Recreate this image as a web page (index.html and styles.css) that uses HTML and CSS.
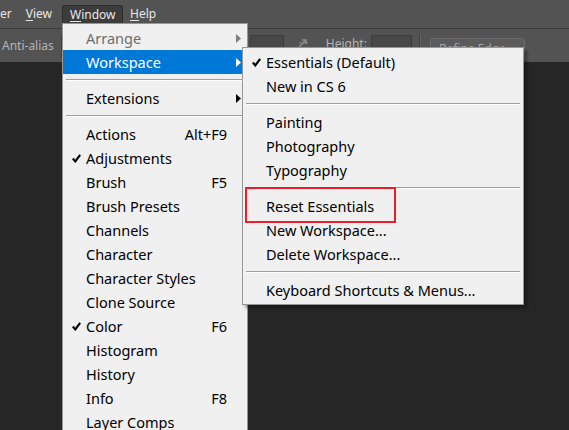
FILE: index.html
```html
<!DOCTYPE html>
<html lang="en">
<head>
    <meta charset="UTF-8">
    <title>Window &gt; Workspace</title>
    <link rel="stylesheet" href="styles.css">
</head>
<body>
    <div class="menubar">
        <span class="menubar-item cut">er</span>
        <span class="menubar-item"><u>V</u>iew</span>
        <span class="menubar-item open"><u>W</u>indow</span>
        <span class="menubar-item"><u>H</u>elp</span>
    </div>

    <div class="optionsbar">
        <span class="opt-label">Anti-alias</span>
        <span class="opt-sep"></span>
        <span class="opt-field wide"></span>
        <svg class="swap" width="12" height="10" viewBox="0 0 12 10">
            <path d="M1 9 L8 2 M4 2 H8 V6" fill="none" stroke="#8a8a8a" stroke-width="1.6"/>
            <path d="M1 5 H10" fill="none" stroke="#8a8a8a" stroke-width="1"/>
        </svg>
        <span class="opt-label height">Height:</span>
        <span class="opt-field"></span>
        <span class="opt-sep right"></span>
        <span class="opt-button">Refine Edge...</span>
    </div>

    <div class="canvas"></div>

    <!-- Window menu -->
    <div class="menu main-menu">
        <div class="row disabled"><span class="check"></span><span class="label">Arrange</span><span class="key"></span><span class="sub"><svg width="5" height="9" viewBox="0 0 5 9"><polygon points="0,0 5,4.5 0,9"/></svg></span></div>
        <div class="row active"><span class="check"></span><span class="label">Workspace</span><span class="key"></span><span class="sub"><svg width="5" height="9" viewBox="0 0 5 9"><polygon points="0,0 5,4.5 0,9"/></svg></span></div>
        <div class="sep"></div>
        <div class="row"><span class="check"></span><span class="label">Extensions</span><span class="key"></span><span class="sub"><svg width="5" height="9" viewBox="0 0 5 9"><polygon points="0,0 5,4.5 0,9"/></svg></span></div>
        <div class="sep"></div>
        <div class="row"><span class="check"></span><span class="label">Actions</span><span class="key">Alt+F9</span><span class="sub"></span></div>
        <div class="row"><span class="check on"></span><span class="label">Adjustments</span><span class="key"></span><span class="sub"></span></div>
        <div class="row"><span class="check"></span><span class="label">Brush</span><span class="key">F5</span><span class="sub"></span></div>
        <div class="row"><span class="check"></span><span class="label">Brush Presets</span><span class="key"></span><span class="sub"></span></div>
        <div class="row"><span class="check"></span><span class="label">Channels</span><span class="key"></span><span class="sub"></span></div>
        <div class="row"><span class="check"></span><span class="label">Character</span><span class="key"></span><span class="sub"></span></div>
        <div class="row"><span class="check"></span><span class="label">Character Styles</span><span class="key"></span><span class="sub"></span></div>
        <div class="row"><span class="check"></span><span class="label">Clone Source</span><span class="key"></span><span class="sub"></span></div>
        <div class="row"><span class="check on"></span><span class="label">Color</span><span class="key">F6</span><span class="sub"></span></div>
        <div class="row"><span class="check"></span><span class="label">Histogram</span><span class="key"></span><span class="sub"></span></div>
        <div class="row"><span class="check"></span><span class="label">History</span><span class="key"></span><span class="sub"></span></div>
        <div class="row"><span class="check"></span><span class="label">Info</span><span class="key">F8</span><span class="sub"></span></div>
        <div class="row"><span class="check"></span><span class="label">Layer Comps</span><span class="key"></span><span class="sub"></span></div>
    </div>

    <!-- Workspace submenu -->
    <div class="menu submenu">
        <div class="row"><span class="check on"></span><span class="label">Essentials (Default)</span></div>
        <div class="row"><span class="check"></span><span class="label">New in CS 6</span></div>
        <div class="sep"></div>
        <div class="row"><span class="check"></span><span class="label">Painting</span></div>
        <div class="row"><span class="check"></span><span class="label">Photography</span></div>
        <div class="row"><span class="check"></span><span class="label">Typography</span></div>
        <div class="sep"></div>
        <div class="row marked"><span class="check"></span><span class="label">Reset Essentials</span></div>
        <div class="row"><span class="check"></span><span class="label">New Workspace...</span></div>
        <div class="row"><span class="check"></span><span class="label">Delete Workspace...</span></div>
        <div class="sep"></div>
        <div class="row"><span class="check"></span><span class="label">Keyboard Shortcuts &amp; Menus...</span></div>
    </div>
</body>
</html>
```

FILE: styles.css
```css
:root {
    --chrome: #535353;
    --canvas: #262626;
    --menu-bg: #f0f0f0;
    --menu-border: #979797;
    --highlight: #0078d7;
    --mark: #e8202a;
}

body {
    margin: 0;
    width: 569px;
    height: 430px;
    overflow: hidden;
    background-color: var(--canvas);
    font-family: "Noto Sans", "Open Sans", sans-serif;
    position: relative;
}

/* top menu bar */
.menubar {
    height: 28px;
    background-color: var(--chrome);
    border-bottom: 1px solid #3a3a3a;
    display: flex;
    align-items: center;
    font-size: 12px;
    color: #e8e8e8;
}

.menubar-item {
    padding: 0 7px;
    height: 19px;
    line-height: 18px;
    box-sizing: border-box;
}

.menubar-item u {
    text-underline-offset: 2px;
}

.menubar-item.cut {
    margin-left: -7px;
}

.menubar-item.open {
    background-color: #3c3c3c;
    border: 1px solid #2c2c2c;
    border-radius: 2px;
    height: 20px;
    margin-top: 2px;
    margin-left: 3px;
    width: 61px;
}

/* tool options bar */
.optionsbar {
    height: 33px;
    background-color: var(--chrome);
    display: flex;
    align-items: center;
    font-size: 12px;
    color: #b4b4b4;
}

.opt-label {
    padding-left: 2px;
}

.opt-sep {
    width: 1px;
    height: 22px;
    background-color: #3f3f3f;
    border-right: 1px solid #636363;
    margin-left: 7px;
}

.opt-field {
    width: 39px;
    height: 16px;
    background-color: #484848;
    border: 1px solid #3c3c3c;
    margin-left: 4px;
    margin-top: -4px;
}

.opt-field.wide {
    width: 32px;
    margin-left: 187px;
}

.swap {
    margin-left: 14px;
    margin-top: -6px;
}

.opt-label.height {
    margin-left: 16px;
    padding: 0;
    margin-top: -4px;
}

.opt-sep.right {
    margin-left: 7px;
}

.opt-button {
    margin-left: 9px;
    margin-top: 8px;
    width: 95px;
    height: 24px;
    box-sizing: border-box;
    background-color: #5b5b5b;
    border: 1px solid #6c6c6c;
    border-radius: 3px;
    color: #a4a4a4;
    text-align: center;
    line-height: 20px;
}

.canvas {
    height: 368px;
}

/* dropdown menus */
.menu {
    position: absolute;
    background-color: var(--menu-bg);
    border: 1px solid var(--menu-border);
    padding: 2px 0;
    font-size: 14.5px;
    color: #000;
    box-sizing: border-box;
}

.main-menu {
    left: 62px;
    top: 23px;
    width: 186px;
    height: 440px;
}

.submenu {
    left: 242px;
    top: 47px;
    width: 282px;
    box-shadow: 3px 3px 3px rgba(0, 0, 0, 0.35);
}

.row {
    display: flex;
    align-items: center;
    height: 24px;
    position: relative;
    white-space: nowrap;
}

.check {
    width: 23px;
    flex: none;
    display: flex;
    justify-content: center;
}

.check.on::before {
    content: "";
    width: 9px;
    height: 9px;
    background: url("data:image/svg+xml;utf8,<svg xmlns='http://www.w3.org/2000/svg' width='9' height='9' viewBox='0 0 9 9'><path d='M0.8 4.6 L3.3 7.4 L8.2 0.8' fill='none' stroke='black' stroke-width='2.2'/></svg>") no-repeat;
    margin-left: 4px;
}

.label {
    flex: 1;
}

.sub {
    width: 18px;
    flex: none;
    display: flex;
    justify-content: center;
    padding-left: 2px;
}

.sub svg {
    fill: #000;
}

.row.disabled {
    color: #6d6d6d;
}

.row.disabled .sub svg {
    fill: #808080;
}

.row.active {
    background-color: var(--highlight);
    color: #fff;
}

.row.active .sub svg {
    fill: #fff;
}

.sep {
    height: 1px;
    background-color: #a0a0a0;
    border-bottom: 1px solid #fff;
    margin: 5px 3px 5px 3px;
}

.row.marked::after {
    content: "";
    position: absolute;
    left: 2px;
    top: -7px;
    width: 151px;
    height: 36px;
    border: 2px solid var(--mark);
    box-sizing: border-box;
}
```
